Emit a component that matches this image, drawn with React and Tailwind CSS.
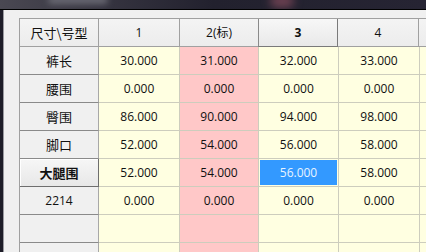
import React from "react";

const cols = ["1", "2(标)", "3", "4", ""];
const rows = [
  { h: "裤长", v: ["30.000", "31.000", "32.000", "33.000"] },
  { h: "腰围", v: ["0.000", "0.000", "0.000", "0.000"] },
  { h: "臀围", v: ["86.000", "90.000", "94.000", "98.000"] },
  { h: "脚口", v: ["52.000", "54.000", "56.000", "58.000"] },
  { h: "大腿围", v: ["52.000", "54.000", "56.000", "58.000"], bold: true },
  { h: "2214", v: ["0.000", "0.000", "0.000", "0.000"] },
  { h: "", v: ["", "", "", ""] },
  { h: "", v: ["", "", "", ""] },
];

const widths = ["w-[81px]", "w-[79px]", "w-[80px]", "w-[81px]", "w-[40px]"];
const num = "font-['Open_Sans','Noto_Sans_CJK_SC',sans-serif] text-[12px]";

export default function App() {
  return (
    <div className="w-[426px] h-[252px] overflow-hidden bg-[#1e1d28] flex flex-col font-['Noto_Sans_CJK_SC',sans-serif] text-[13px] text-[#111]">
      <div className="h-[9px] shrink-0 bg-gradient-to-r from-[#4a4852] via-[#22212e] to-[#262433] relative overflow-hidden">
        <div className="absolute left-[270px] top-[-6px] w-[24px] h-[14px] rounded-full bg-[#6a4050] blur-[4px]" />
        <div className="absolute left-[48px] top-[-4px] w-[60px] h-[8px] rounded-full bg-[#6a6a74] blur-[3px]" />
      </div>
      <div className="h-px shrink-0 bg-black" />
      <div className="flex flex-1 min-h-0">
        <div className="w-[3px] shrink-0 bg-[#1e1d28]" />
        <div className="flex-1 bg-[#f0f0f0] border-l border-[#9a9aa0] pl-[15px] pt-[8px] overflow-hidden">
          <div className="border-l border-t border-[#a0a0a0] w-max">
            <div className="flex h-[28px]">
              <div className="w-[79px] shrink-0 border-r border-b border-[#a0a0a0] bg-gradient-to-b from-[#f4f4f4] to-[#ececec] flex items-center justify-center">
                尺寸\号型
              </div>
              {cols.map((c, i) => (
                <div
                  key={i}
                  className={`${widths[i]} shrink-0 border-r border-b flex items-center justify-center ${num} ${
                    i === 2
                      ? "border-[#7a7a7a] border-l border-l-[#8a8a8a] bg-gradient-to-b from-[#f7f7f7] to-[#e9e9e9] font-bold -ml-px"
                      : "border-[#a0a0a0] bg-gradient-to-b from-[#f4f4f4] to-[#ececec]"
                  }`}
                >
                  {c}
                </div>
              ))}
            </div>
            {rows.map((r, ri) => (
              <div key={ri} className="flex h-[28px]">
                <div
                  className={`w-[79px] shrink-0 border-r border-b flex items-center justify-center ${
                    r.bold
                      ? "font-bold border-[#6e6e6e] bg-gradient-to-b from-[#f6f6f6] to-[#e8e8e8] shadow-[inset_1px_1px_0_#ffffff]"
                      : "border-[#8a8a8a] border-r-[#a8a8a8] bg-[#f0f0f0]"
                  } ${/^\d/.test(r.h) ? num : ""}`}
                >
                  {r.h}
                </div>
                {[0, 1, 2, 3, 4].map((ci) => {
                  const sel = ri === 4 && ci === 2;
                  const bg = ci === 1 ? "bg-[#ffc8c8]" : "bg-[#ffffe1]";
                  return (
                    <div
                      key={ci}
                      className={`${widths[ci]} shrink-0 border-r border-b border-[#cdcdbd] ${bg} flex items-stretch ${num}`}
                    >
                      {sel ? (
                        <div className="flex-1 m-px bg-[#3399ff] text-[#e8f4ff] flex items-center justify-center">
                          {r.v[ci]}
                        </div>
                      ) : (
                        <div className="flex-1 flex items-center justify-center">
                          {ci < 4 ? r.v[ci] : ""}
                        </div>
                      )}
                    </div>
                  );
                })}
              </div>
            ))}
          </div>
        </div>
      </div>
    </div>
  );
}
